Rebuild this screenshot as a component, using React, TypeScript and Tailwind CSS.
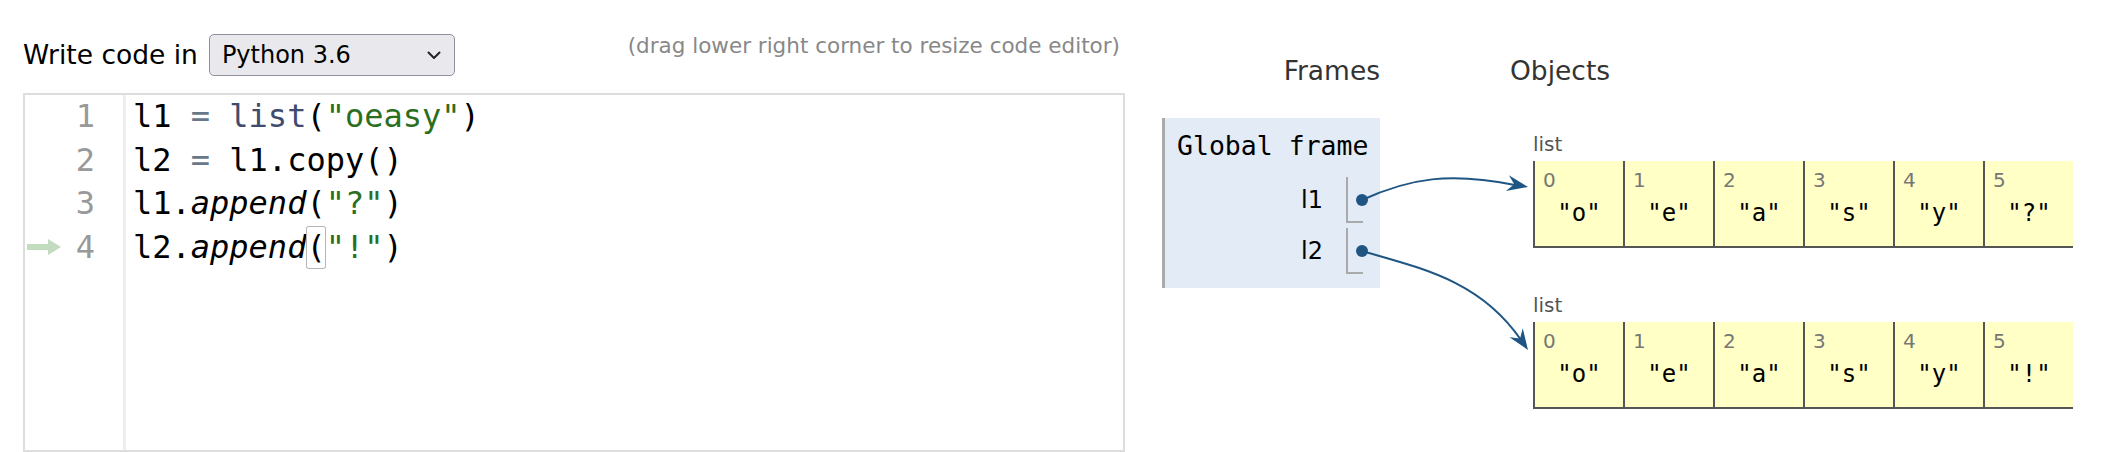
import React from "react";

const mono = "[font-family:'DejaVu_Sans_Mono',Menlo,monospace]";

function Cell({ idx, val }: { idx: number; val: string }) {
  return (
    <div className="h-[85px] w-[90px] border-l-2 border-[#555] bg-[#ffffc6]">
      <div className="pl-[8px] pt-[8px] text-[20px] leading-[22px] text-[#777]">{idx}</div>
      <div className={`mt-[7px] text-center text-[24px] leading-[30px] text-black ${mono}`}>
        {val}
      </div>
    </div>
  );
}

function ListObj({ items }: { items: string[] }) {
  return (
    <div>
      <div className="text-[20px] leading-[24px] text-[#555]">list</div>
      <div className="mt-[5px] flex w-fit border-b-2 border-[#555]">
        {items.map((v, i) => (
          <Cell key={i} idx={i} val={`"${v}"`} />
        ))}
      </div>
    </div>
  );
}

function VarRow({ name, className = "" }: { name: string; className?: string }) {
  return (
    <div className={`flex h-[46px] items-center justify-end pr-[17px] ${className}`}>
      <span className="mr-[23px] text-[24px] text-black">{name}</span>
      <div className="h-[46px] w-[17px] border-b-2 border-l-2 border-[#aaa]" />
    </div>
  );
}

function Head({ x, y, deg }: { x: number; y: number; deg: number }) {
  return (
    <path
      d="M0 0 L-21 -8 L-14 0 L-21 8 Z"
      fill="#1f5583"
      transform={`translate(${x} ${y}) rotate(${deg})`}
    />
  );
}

export default function App() {
  const ln = "h-[43.5px] leading-[43.5px]";
  return (
    <div className="relative flex h-[452px] w-[2108px] overflow-hidden bg-white [font-family:'DejaVu_Sans',Verdana,sans-serif]">
      {/* editor side */}
      <div className="ml-[23px] flex w-[1102px] flex-col">
        <div className="mt-[34px] flex items-start justify-between">
          <div className="flex h-[42px] items-center gap-[11px]">
            <span className="text-[26.5px] text-black">Write code in</span>
            <div className="flex h-[42px] w-[246px] items-center justify-between rounded-[5px] border border-[#8f8f9d] bg-[#e9e9ed] pl-[12px] pr-[13px] text-[24px] text-black">
              <span>Python 3.6</span>
              <svg width="14" height="9" viewBox="0 0 14 9" fill="none">
                <path d="M1.5 1.5 L7 7 L12.5 1.5" stroke="#222" strokeWidth="2" strokeLinecap="round" strokeLinejoin="round" />
              </svg>
            </div>
          </div>
          <span className="mr-[5px] text-[21.5px] leading-[24px] text-[#888]">
            (drag lower right corner to resize code editor)
          </span>
        </div>

        <div className="mt-[17px] flex h-[400px] border-2 border-[#ddd]">
          <div className={`w-[101px] border-r-[3px] border-[#eee] text-[32px] text-[#999] ${mono}`}>
            {[1, 2, 3].map((n) => (
              <div key={n} className={`${ln} pr-[28px] text-right`}>{n}</div>
            ))}
            <div className={`${ln} flex items-center justify-end pr-[28px]`}>
              <svg width="34" height="16" viewBox="0 0 34 16" className="mr-[15px]">
                <rect x="0" y="5" width="23" height="6" fill="#c3dbbf" />
                <polygon points="21,0 34,8 21,16" fill="#c3dbbf" />
              </svg>
              <span>4</span>
            </div>
          </div>
          <div className={`pl-[7px] text-[32px] text-black ${mono}`}>
            <div className={ln}>
              l1 <span className="text-[#66788a]">=</span> <span className="text-[#3e4c70]">list</span>(
              <span className="text-[#2a6e1e]">"oeasy"</span>)
            </div>
            <div className={ln}>
              l2 <span className="text-[#66788a]">=</span> l1.copy()
            </div>
            <div className={ln}>
              l1.<span className="italic">append</span>(<span className="text-[#2a6e1e]">"?"</span>)
            </div>
            <div className={ln}>
              l2.<span className="italic">append</span>
              <span className="inline-block h-[43.5px] rounded-[3px] ring-1 ring-inset ring-[#b5b5b5]">(</span>
              <span className="text-[#2a6e1e]">"!"</span>)
            </div>
          </div>
        </div>
      </div>

      {/* visualizer side */}
      <div className="ml-[37px] flex pt-[56px]">
        <div className="flex w-[218px] flex-col">
          <div className="text-right text-[26.5px] leading-[30px] text-[#333]">Frames</div>
          <div className="mt-[32px] border-l-[3px] border-[#aaa] bg-[#e2ebf6] pb-[14px]">
            <div className={`pl-[12px] pt-[13px] text-[26.5px] leading-[30px] text-black ${mono}`}>
              Global frame
            </div>
            <VarRow name="l1" className="mt-[16px]" />
            <VarRow name="l2" className="mt-[5px]" />
          </div>
        </div>
        <div className="ml-[130px] flex flex-col">
          <div className="text-[26.5px] leading-[30px] text-[#333]">Objects</div>
          <div className="ml-[23px] mt-[46px]">
            <ListObj items={["o", "e", "a", "s", "y", "?"]} />
            <div className="mt-[45px]">
              <ListObj items={["o", "e", "a", "s", "y", "!"]} />
            </div>
          </div>
        </div>
      </div>

      {/* pointer arrows */}
      <svg className="pointer-events-none absolute left-0 top-0" width="2108" height="452" viewBox="0 0 2108 452">
        <path d="M1362 200 C1410 178 1450 172 1515 185" stroke="#1f5583" strokeWidth="2" fill="none" />
        <Head x={1528} y={187} deg={10.9} />
        <path d="M1362 251 C1420 268 1480 280 1521 340" stroke="#1f5583" strokeWidth="2" fill="none" />
        <Head x={1528} y={350} deg={55.6} />
        <circle cx="1362" cy="200" r="6" fill="#1f5583" />
        <circle cx="1362" cy="251" r="6" fill="#1f5583" />
      </svg>
    </div>
  );
}
